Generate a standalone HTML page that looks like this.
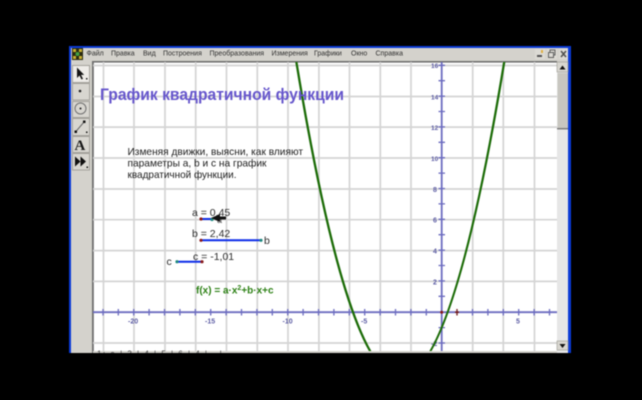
<!DOCTYPE html>
<html><head><meta charset="utf-8">
<style>
html,body{margin:0;padding:0;background:#000;width:642px;height:400px;overflow:hidden}
svg{display:block;filter:blur(0.6px)}
text{font-family:"Liberation Sans",sans-serif}
</style></head>
<body>
<svg xmlns="http://www.w3.org/2000/svg" width="642" height="400" viewBox="0 0 642 400">
<defs><clipPath id="c"><rect x="93" y="62" width="464" height="289"/></clipPath></defs>
<rect width="642" height="400" fill="#000"/>
<rect x="69" y="46" width="502" height="307" fill="#0a3ad6"/>
<rect x="71" y="48" width="497" height="305" fill="#d4d2cc"/>
<!-- app icon -->
<rect x="72" y="48" width="11" height="12" fill="#2a2a10"/>
<rect x="73" y="49" width="3" height="3" fill="#c8b030"/><rect x="79" y="49" width="3" height="3" fill="#c8b030"/>
<rect x="73" y="56" width="3" height="3" fill="#c8b030"/><rect x="79" y="56" width="3" height="3" fill="#c8b030"/>
<circle cx="77.500" cy="54" r="2" fill="#40a040"/>
<!-- menu -->
<g font-size="7" fill="#303030">
<text x="86.500" y="55.500">Файл</text>
<text x="111" y="55.500">Правка</text>
<text x="143" y="55.500">Вид</text>
<text x="163" y="55.500">Построения</text>
<text x="209.500" y="55.500">Преобразования</text>
<text x="271.500" y="55.500">Измерения</text>
<text x="314" y="55.500">Графики</text>
<text x="351" y="55.500">Окно</text>
<text x="375.500" y="55.500">Справка</text>
</g>
<!-- window buttons -->
<rect x="535" y="49" width="10" height="10" fill="#dcdad4"/><rect x="537" y="55" width="5" height="2" fill="#505050"/><rect x="541" y="50" width="2" height="3" fill="#e0b040"/>
<rect x="547" y="49" width="10" height="10" fill="#dcdad4"/><rect x="550" y="50" width="5" height="5" fill="none" stroke="#606060"/><rect x="548.500" y="52.500" width="5" height="5" fill="#dcdad4" stroke="#606060"/>
<rect x="559" y="49" width="9" height="10" fill="#dcdad4"/><path d="M561 51l5 6M566 51l-5 6" stroke="#505050" stroke-width="1.500"/>
<!-- toolbar -->
<g fill="#d8d6d0" stroke="#a4a29c">
<rect x="72.500" y="65.500" width="17" height="17" fill="#eeece8"/>
<rect x="72.500" y="83.500" width="17" height="16.500"/>
<rect x="72.500" y="101.500" width="17" height="16"/>
<rect x="72.500" y="118.500" width="17" height="17"/>
<rect x="72.500" y="136.500" width="17" height="16"/>
<rect x="72.500" y="153.500" width="17" height="16.500"/>
</g>
<path d="M77 67.500v10.500l2.500-2.500 2 4 1.500-.8-2-3.800h3.200z" fill="#151515"/>
<rect x="86" y="78" width="1.500" height="1.500" fill="#202020"/>
<circle cx="80" cy="91" r="1.300" fill="#202020"/>
<circle cx="80.500" cy="108.500" r="5.500" fill="none" stroke="#707070"/>
<circle cx="80.500" cy="108.500" r="1" fill="#202020"/>
<path d="M75.500 132L84 122" stroke="#666" stroke-width="1"/><rect x="74.500" y="130.500" width="2.500" height="2.500" fill="#111"/><rect x="83" y="120.500" width="2.500" height="2.500" fill="#111"/><rect x="86" y="131.500" width="1.500" height="1.500" fill="#111"/>
<text x="74.500" y="150" font-size="15" font-weight="bold" style="font-family:'Liberation Serif',serif" fill="#181818">A</text>
<path d="M75 156.500v10l5.500-5zM80.500 156.500v10l5.500-5z" fill="#101010"/><rect x="86.500" y="166.500" width="1.500" height="1.500" fill="#111"/>
<!-- canvas -->
<rect x="92" y="61" width="465" height="290" fill="#fff"/>
<rect x="92" y="61" width="465" height="1.600" fill="#6e6e6e"/>
<rect x="92" y="61" width="1.800" height="292" fill="#6e6e6e"/>
<g clip-path="url(#c)">
<g stroke="#d4d4d4" stroke-width="1.700">
<path d="M103.500 61V352M134 61V352M165 61V352M195.700 61V352M226.500 61V352M257.300 61V352M288 61V352M318.900 61V352M349.500 61V352M380.300 61V352M411 61V352M472.700 61V352M503.300 61V352M534.500 61V352"/>
<path d="M92 65.500H557M92 96.500H557M92 127.100H557M92 158H557M92 189H557M92 219.700H557M92 250.600H557M92 281.400H557M92 343H557"/>
</g>
<!-- axes -->
<g stroke="#6c6cc0" fill="none">
<path d="M441.700 61V352M92 312.200H557" stroke-width="1.800"/>
<path stroke-width="1.300" d="M103 309v6.500M118.300 309v6.500M133.700 309v6.500M149.100 309v6.500M164.500 309v6.500M179.900 309v6.500M195.300 309v6.500M210.700 309v6.500M226.100 309v6.500M241.500 309v6.500M256.900 309v6.500M272.300 309v6.500M287.700 309v6.500M303.100 309v6.500M318.500 309v6.500M333.900 309v6.500M349.300 309v6.500M364.700 309v6.500M380.100 309v6.500M395.500 309v6.500M410.900 309v6.500M426.300 309v6.500M472.500 309v6.500M487.900 309v6.500M503.300 309v6.500M518.700 309v6.500M534.100 309v6.500M549.500 309v6.500"/>
<path stroke-width="1.300" d="M438.500 65.300h6.500M438.500 80.700h6.500M438.500 96.100h6.500M438.500 111.500h6.500M438.500 126.900h6.500M438.500 142.300h6.500M438.500 157.700h6.500M438.500 173.100h6.500M438.500 188.500h6.500M438.500 203.900h6.500M438.500 219.300h6.500M438.500 234.700h6.500M438.500 250.100h6.500M438.500 265.500h6.500M438.500 280.900h6.500M438.500 296.300h6.500M438.500 327.600h6.500M438.500 343h6.500"/>
</g>
<g font-size="7" fill="#5c5ca4" font-weight="bold">
<text x="128" y="323.500">-20</text>
<text x="205" y="323.500">-15</text>
<text x="282.500" y="323.500">-10</text>
<text x="361" y="323.500">-5</text>
<text x="516" y="323.500">5</text>
<text x="431" y="68" font-size="6.500">16</text>
<text x="431" y="99.500" font-size="6.500">14</text>
<text x="431" y="130" font-size="6.500">12</text>
<text x="431" y="161" font-size="6.500">10</text>
<text x="433" y="192">8</text>
<text x="433" y="222.500">6</text>
<text x="433" y="253.500">4</text>
<text x="433" y="284.500">2</text>
<text x="431" y="346">-2</text>
</g>
<!-- curve -->
<path d="M287.700 7.200Q403.200 767.200 518.700 -32" fill="none" stroke="#1c6c08" stroke-width="2.300"/>
<circle cx="441.700" cy="312.200" r="1.500" fill="#8a1818"/>
<path d="M457 309v6.500M455 312.200h4" stroke="#701818" stroke-width="1.300"/>
</g>
<!-- title -->
<text x="100" y="100" font-size="16.300" font-weight="bold" fill="#6656cc" textLength="244" lengthAdjust="spacingAndGlyphs">График квадратичной функции</text>
<!-- body -->
<g font-size="10.500" fill="#222">
<text x="127.500" y="155" textLength="175.500" lengthAdjust="spacingAndGlyphs">Изменяя движки, выясни, как влияют</text>
<text x="127.500" y="166.500" textLength="139" lengthAdjust="spacingAndGlyphs">параметры a, b и c на график</text>
<text x="127.500" y="178" textLength="109" lengthAdjust="spacingAndGlyphs">квадратичной функции.</text>
</g>
<!-- sliders -->
<g stroke="#0c2ce8" stroke-width="2">
<path d="M201 219H212"/><path d="M201 240.300H261"/><path d="M177 261.700H202"/>
</g>
<g fill="#8a1a1a"><circle cx="201" cy="219" r="1.600"/><circle cx="201" cy="240.300" r="1.600"/><circle cx="202" cy="261.700" r="1.600"/></g>
<g fill="#208a80"><circle cx="212" cy="219.500" r="1.600"/><circle cx="261" cy="240.300" r="1.600"/><circle cx="177" cy="261.700" r="1.600"/></g>
<g font-size="10.500" fill="#2c2c2c">
<text x="192" y="216">a = 0,45</text>
<text x="192" y="237">b = 2,42</text>
<text x="193" y="260">c = -1,01</text>
<text x="264" y="244">b</text>
<text x="166.500" y="265">c</text>
<text x="217" y="223" font-size="9" fill="#555">a</text>
</g>
<path d="M211 218l9-4v2.500h6v3h-6v2.500z" fill="#101010"/>
<text x="196" y="293.500" font-size="10" font-weight="bold" fill="#2c8014">f(x) = a·x<tspan font-size="7" dy="-3.500">2</tspan><tspan dy="3.500">+b·x+c</tspan></text>
<!-- bottom band -->
<rect x="93" y="351" width="464" height="2" fill="#d4d2cc"/>
<text x="97" y="356.500" font-size="8" fill="#404040" letter-spacing="1.500">1: a | 3 | 4 | 5 | 6 | 4 | . |</text>
<!-- scrollbar -->
<rect x="557" y="62" width="11" height="291" fill="#e6e6e6"/>
<rect x="557" y="62" width="11" height="10" fill="#d8d6d0" stroke="#9a9890" stroke-width=".6"/>
<path d="M559.500 69.500h6l-3-4z" fill="#111"/>
<rect x="557.500" y="73" width="10.500" height="56" fill="#c8c6c0"/>
<rect x="557" y="128" width="11" height="1.400" fill="#777"/>
<rect x="557" y="341" width="11" height="9" fill="#d8d6d0" stroke="#9a9890" stroke-width=".6"/>
<path d="M559.500 344h6l-3 4z" fill="#111"/>
<rect x="0" y="353" width="642" height="47" fill="#000"/>
</svg>
</body></html>
